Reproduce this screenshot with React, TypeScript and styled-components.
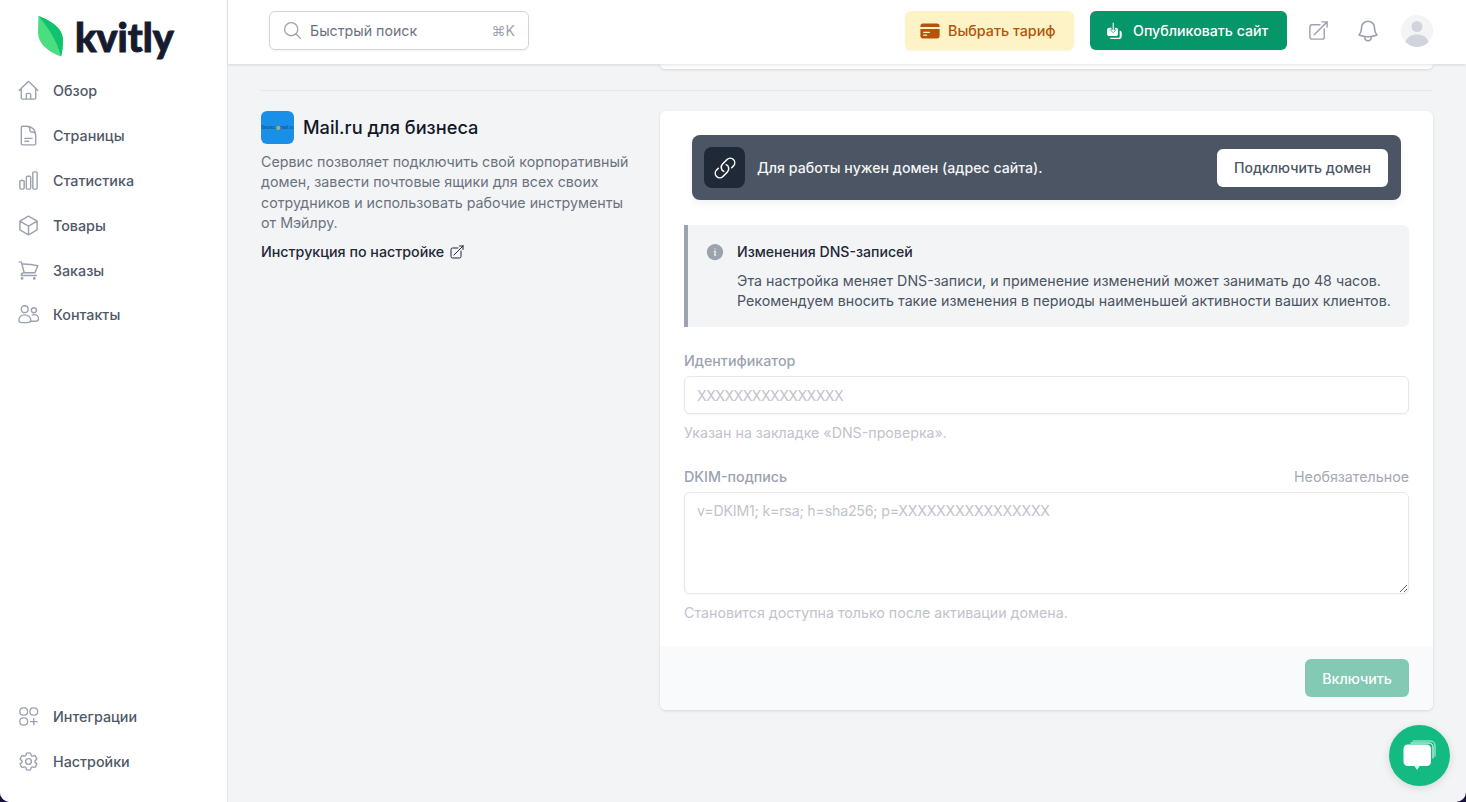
import styled, { createGlobalStyle } from 'styled-components'
import {
  HiOutlineHome,
  HiOutlineDocumentText,
  HiOutlineChartBar,
  HiOutlineCube,
  HiOutlineShoppingCart,
  HiOutlineCog6Tooth,
  HiOutlineMagnifyingGlass,
  HiOutlineArrowTopRightOnSquare,
  HiOutlineBell,
  HiOutlineLink,
  HiInformationCircle,
  HiCreditCard,
} from 'react-icons/hi2'

const GlobalStyle = createGlobalStyle`
  html, body {
    margin: 0;
    height: 802px;
    overflow: hidden;
    background: #1c1240;
  }
  * { box-sizing: border-box; }
  #root {
    height: 802px;
    border-radius: 0 0 10px 10px;
    overflow: hidden;
    font-family: Inter, "Noto Sans", sans-serif;
    font-size: 14.2px;
    color: #111827;
  }
`

function ContactsIcon() {
  return (
    <svg width="1em" height="1em" viewBox="0 0 24 24" fill="none" stroke="currentColor" strokeWidth="1.4">
      <circle cx="8" cy="6.5" r="3.6" />
      <circle cx="17.6" cy="7.6" r="2.6" />
      <path d="M2 18c0-3.4 2.6-5.6 6-5.6s6.400 2.200 6.400 5.400c0 1.800-1.600 2.700-3.400 2.700H5c-1.700 0-3-1-3-2.500Z" />
      <path d="M15.400 12.600c.7-.3 1.400-.4 2.200-.4 2.800 0 4.800 1.800 4.800 4.200 0 1.600-1.200 2.600-2.800 2.600h-5.200" />
    </svg>
  )
}

function IntegrationsIcon() {
  return (
    <svg width="1em" height="1em" viewBox="0 0 24 24" fill="none" stroke="currentColor" strokeWidth="1.4">
      <rect x="3" y="3" width="8" height="7.500" rx="3.500" />
      <rect x="13.500" y="3" width="8" height="7.500" rx="3.500" />
      <rect x="3" y="13.500" width="8" height="7.500" rx="3.500" />
      <path d="M17.500 13.500v7.500M13.500 17.300h8" />
    </svg>
  )
}

function PublishIcon() {
  return (
    <svg width="18" height="20" viewBox="0 0 20 22" fill="none">
      <path d="M3.500 7.500h2.700v4h3.600v-4h1.200c1.300 0 2.300 1 2.300 2.300v4.400c0 1.300-1 2.300-2.300 2.300H3.500c-1.300 0-2.300-1-2.300-2.300V9.800c0-1.300 1-2.300 2.300-2.300Z" fill="#fff" />
      <path d="M7.100 1.500h1.800v8.200h2.300L8 13 4.800 9.700h2.300V1.500Z" fill="#fff" stroke="#059669" strokeWidth=".6" />
      <path d="M15.200 10.500c1.300.3 2.300 1.300 2.300 2.700v3.500c0 1.800-1.400 3.300-3.300 3.300H6.500c-1.100 0-2-.6-2.500-1.500h10.200c.6 0 1-.4 1-1v-7Z" fill="#fff" />
    </svg>
  )
}

function ChatIcon() {
  return (
    <svg width="33" height="31" viewBox="0 0 33 31" fill="none">
      <path d="M10 1h17.500c2.800 0 4.500 1.800 4.500 4.500V16" stroke="#fff" strokeOpacity=".8" strokeWidth="1" strokeLinecap="round" />
      <path d="M8 3h18c2.400 0 4 1.600 4 4v11" stroke="#fff" strokeWidth="1" strokeLinecap="round" />
      <path d="M5 4.500h18.500c2.800 0 4.500 1.800 4.500 4.500v12.500c0 2.800-1.700 4.500-4.500 4.500h-7l-2.500 4-2.500-4H5c-2.800 0-4.500-1.700-4.500-4.500V9c0-2.700 1.700-4.500 4.500-4.500Z" fill="#fff" />
    </svg>
  )
}

const mainNav = [
  { label: 'Обзор', icon: <HiOutlineHome /> },
  { label: 'Страницы', icon: <HiOutlineDocumentText /> },
  { label: 'Статистика', icon: <HiOutlineChartBar /> },
  { label: 'Товары', icon: <HiOutlineCube /> },
  { label: 'Заказы', icon: <HiOutlineShoppingCart /> },
  { label: 'Контакты', icon: <ContactsIcon /> },
]

const bottomNav = [
  { label: 'Интеграции', icon: <IntegrationsIcon /> },
  { label: 'Настройки', icon: <HiOutlineCog6Tooth /> },
]

function App() {
  return (
    <Page>
      <GlobalStyle />
      <Sidebar>
        <Logo>
          <svg width="28" height="42" viewBox="0 0 28 42">
            <path d="M1.500 1C12 5 26 12 26 25c0 7-.8 12.500-2 16.500C12 37 0 29 1 15c.3-5 .2-10 .5-14Z" fill="#4ade80" />
            <path d="M1.500 1C12 5 26 12 26 25c0 7-.8 12.500-2 16.500C21 28 12 13 1.500 1Z" fill="#10c16d" />
          </svg>
          <LogoText>kvitly</LogoText>
        </Logo>
        <Nav>
          {mainNav.map((item) => (
            <NavItem key={item.label}>
              <NavIcon>{item.icon}</NavIcon>
              {item.label}
            </NavItem>
          ))}
        </Nav>
        <BottomNav>
          {bottomNav.map((item) => (
            <NavItem key={item.label}>
              <NavIcon>{item.icon}</NavIcon>
              {item.label}
            </NavItem>
          ))}
        </BottomNav>
      </Sidebar>

      <Main>
        <Header>
          <SearchBox>
            <HiOutlineMagnifyingGlass size={21} color="#9ca3af" />
            <SearchText>Быстрый поиск</SearchText>
            <Shortcut>⌘K</Shortcut>
          </SearchBox>
          <HeaderActions>
            <TariffButton>
              <HiCreditCard size={22} color="#b45309" />
              Выбрать тариф
            </TariffButton>
            <PublishButton>
              <PublishIcon />
              Опубликовать сайт
            </PublishButton>
            <HeaderIconLink $gap={20}>
              <HiOutlineArrowTopRightOnSquare size={23} />
            </HeaderIconLink>
            <HeaderIconLink $gap={25}>
              <HiOutlineBell size={26} />
            </HeaderIconLink>
            <Avatar>
              <svg width="32" height="32" viewBox="0 0 32 32">
                <circle cx="16" cy="11.500" r="5.500" fill="#d1d5db" />
                <path d="M4 28c1.500-6 6.500-8.500 12-8.500s10.500 2.500 12 8.500c-3 2.700-7.200 4-12 4s-9-1.300-12-4Z" fill="#d1d5db" />
              </svg>
            </Avatar>
          </HeaderActions>
        </Header>

        <Content>
          <TopRow>
            <PrevCard />
          </TopRow>
          <Divider />
          <Section>
            <Intro>
              <IntroHead>
                <ServiceLogo>
                  <ServiceLogoText>бизнес<b>@</b>mail.ru</ServiceLogoText>
                </ServiceLogo>
                <ServiceName>Mail.ru для бизнеса</ServiceName>
              </IntroHead>
              <IntroText>
                Сервис позволяет подключить свой корпоративный домен, завести почтовые ящики для всех
                своих сотрудников и использовать рабочие инструменты от Мэйлру.
              </IntroText>
              <GuideLink>
                Инструкция по настройке
                <HiOutlineArrowTopRightOnSquare size={16} />
              </GuideLink>
            </Intro>

            <Card>
              <CardBody>
                <DomainBanner>
                  <BannerIcon>
                    <HiOutlineLink size={24} color="#fff" />
                  </BannerIcon>
                  <BannerText>Для работы нужен домен (адрес сайта).</BannerText>
                  <BannerButton>Подключить домен</BannerButton>
                </DomainBanner>

                <Notice>
                  <NoticeIcon>
                    <HiInformationCircle size={20} color="#9ca3af" />
                  </NoticeIcon>
                  <div>
                    <NoticeTitle>Изменения DNS-записей</NoticeTitle>
                    <NoticeText>
                      Эта настройка меняет DNS-записи, и применение изменений может занимать до 48 часов.
                      <br />
                      Рекомендуем вносить такие изменения в периоды наименьшей активности ваших клиентов.
                    </NoticeText>
                  </div>
                </Notice>

                <Field>
                  <LabelRow>
                    <Label>Идентификатор</Label>
                  </LabelRow>
                  <TextInput disabled placeholder="XXXXXXXXXXXXXXXX" />
                  <Hint>Указан на закладке «DNS-проверка».</Hint>
                </Field>

                <Field>
                  <LabelRow>
                    <Label>DKIM-подпись</Label>
                    <Optional>Необязательное</Optional>
                  </LabelRow>
                  <TextArea disabled placeholder="v=DKIM1; k=rsa; h=sha256; p=XXXXXXXXXXXXXXXX" />
                  <Hint>Становится доступна только после активации домена.</Hint>
                </Field>
              </CardBody>
              <CardFooter>
                <SubmitButton disabled>Включить</SubmitButton>
              </CardFooter>
            </Card>
          </Section>
        </Content>
      </Main>

      <ChatButton>
        <ChatIcon />
      </ChatButton>
    </Page>
  )
}

const Page = styled.div`
  display: flex;
  height: 802px;
  background: #f3f4f6;
`

const Sidebar = styled.aside`
  display: flex;
  flex-direction: column;
  flex: 0 0 228px;
  background: #fff;
  border-right: 1px solid #e5e7eb;
`

const Logo = styled.div`
  display: flex;
  align-items: center;
  gap: 10px;
  height: 68.5px;
  padding: 4px 0 0 37px;
`

const LogoText = styled.span`
  font-family: Lato, sans-serif;
  font-weight: 900;
  font-size: 39.5px;
  line-height: 1;
  color: #161b2e;
  -webkit-text-stroke: 0.9px #161b2e;
`

const Nav = styled.nav`
  display: flex;
  flex-direction: column;
`

const BottomNav = styled(Nav)`
  margin-top: auto;
  padding-bottom: 18px;
`

const NavItem = styled.a`
  display: flex;
  align-items: center;
  gap: 13px;
  height: 44.8px;
  padding-left: 17px;
  color: #4f5967;
  font-size: 14.3px;
  font-weight: 500;
`

const NavIcon = styled.span`
  display: flex;
  color: #9ca3af;
  font-size: 23px;
`

const Main = styled.div`
  display: flex;
  flex-direction: column;
  flex: 1;
  min-width: 0;
`

const Header = styled.header`
  position: relative;
  z-index: 1;
  display: flex;
  align-items: center;
  justify-content: space-between;
  flex: 0 0 64px;
  padding: 0 33px 3px 41px;
  background: #fff;
  box-shadow: 0 1px 3px rgba(0, 0, 0, 0.12);
`

const SearchBox = styled.div`
  display: flex;
  align-items: center;
  gap: 7px;
  width: 260px;
  height: 39px;
  padding: 0 13px 0 12px;
  border: 1px solid #d1d5db;
  border-radius: 6px;
  box-shadow: 0 1px 2px rgba(0, 0, 0, 0.05);
`

const SearchText = styled.span`
  flex: 1;
  color: #6b7280;
  font-size: 14.2px;
`

const Shortcut = styled.span`
  color: #9ca3af;
  font-size: 14px;
`

const HeaderActions = styled.div`
  display: flex;
  align-items: center;
`

const TariffButton = styled.button`
  display: flex;
  align-items: center;
  gap: 7px;
  width: 169px;
  height: 39px;
  padding: 0 0 0 14px;
  border: 0;
  border-radius: 6px;
  background: #fef3c7;
  color: #b45309;
  font: 500 14.3px Inter, sans-serif;
  box-shadow: 0 1px 2px rgba(0, 0, 0, 0.05);
`

const PublishButton = styled(TariffButton)`
  gap: 9px;
  width: 197px;
  margin-left: 16px;
  padding-left: 16px;
  background: #059669;
  color: #fff;
  font-size: 14.2px;
`

const HeaderIconLink = styled.span<{ $gap: number }>`
  display: flex;
  margin-left: ${(p) => p.$gap}px;
  color: #9ca3af;
`

const Avatar = styled.span`
  display: block;
  width: 32px;
  height: 32px;
  margin-left: 20px;
  border-radius: 50%;
  background: #f3f4f6;
  overflow: hidden;
`

const Content = styled.main`
  flex: 1;
  padding: 0 33px;
  overflow: hidden;
`

const TopRow = styled.div`
  display: flex;
  justify-content: flex-end;
`

const PrevCard = styled.div`
  width: 773px;
  height: 5px;
  background: #fff;
  border-radius: 0 0 6px 6px;
  box-shadow: 0 1px 3px rgba(0, 0, 0, 0.12);
`

const Divider = styled.div`
  height: 1px;
  margin-top: 21px;
  background: #e5e7eb;
`

const Section = styled.section`
  display: grid;
  grid-template-columns: 375px 773px;
  justify-content: space-between;
  padding-top: 20px;
`

const Intro = styled.div`
  display: flex;
  flex-direction: column;
`

const IntroHead = styled.div`
  display: flex;
  align-items: center;
  gap: 9px;
`

const ServiceLogo = styled.div`
  display: flex;
  align-items: center;
  justify-content: center;
  width: 33px;
  height: 33px;
  border-radius: 6px;
  background: #1a8fe8;
`

const ServiceLogoText = styled.span`
  font-size: 4.2px;
  white-space: nowrap;
  color: #123f66;

  b {
    color: #f5b81f;
  }
`

const ServiceName = styled.h2`
  margin: 0 0 2px;
  font-size: 18.2px;
  font-weight: 500;
  color: #111827;
`

const IntroText = styled.p`
  margin: 8px 0 0;
  color: #6b7280;
  font-size: 14.25px;
  line-height: 20.4px;
`

const GuideLink = styled.a`
  display: flex;
  align-items: center;
  gap: 5px;
  margin-top: 8px;
  color: #1f2937;
  font-size: 14.25px;
  font-weight: 500;
  line-height: 20px;
`

const Card = styled.div`
  background: #fff;
  border-radius: 6px;
  box-shadow: 0 1px 3px rgba(0, 0, 0, 0.12);
  overflow: hidden;
`

const CardBody = styled.div`
  display: flex;
  flex-direction: column;
  padding: 24px 24px 0;
  height: 535px;
`

const DomainBanner = styled.div`
  display: flex;
  align-items: center;
  gap: 12px;
  height: 65px;
  margin: 0 8px;
  padding: 0 13px 0 12px;
  border-radius: 8px;
  background: #4b5563;
  box-shadow: 0 4px 10px rgba(0, 0, 0, 0.05);
`

const BannerIcon = styled.div`
  display: flex;
  align-items: center;
  justify-content: center;
  flex: 0 0 41px;
  height: 41px;
  border-radius: 8px;
  background: #1f2937;
`

const BannerText = styled.span`
  flex: 1;
  color: #f3f4f6;
  font-size: 14.15px;
  font-weight: 500;
`

const BannerButton = styled.button`
  width: 171px;
  height: 38px;
  border: 0;
  border-radius: 6px;
  background: #fff;
  color: #4b5563;
  font: 500 14.1px Inter, sans-serif;
`

const Notice = styled.div`
  display: flex;
  gap: 12px;
  height: 102px;
  margin-top: 25px;
  padding: 17px 10px 0 17px;
  border-left: 4px solid #9ca3af;
  border-radius: 0 6px 6px 0;
  background: #f3f4f6;
`

const NoticeIcon = styled.span`
  display: flex;
  height: 20px;
`

const NoticeTitle = styled.div`
  color: #1f2937;
  font-size: 14.1px;
  font-weight: 500;
  line-height: 20px;
`

const NoticeText = styled.div`
  margin-top: 9px;
  color: #4b5563;
  font-size: 14.23px;
  line-height: 20px;
  white-space: nowrap;
`

const Field = styled.div`
  display: flex;
  flex-direction: column;
  margin-top: 24px;
`

const LabelRow = styled.div`
  display: flex;
  justify-content: space-between;
  height: 20px;
  margin-bottom: 5px;
`

const Label = styled.label`
  color: #9ca3af;
  font-size: 14.25px;
  font-weight: 500;
  line-height: 20px;
`

const Optional = styled.span`
  color: #a3a9b3;
  font-size: 14.25px;
  line-height: 20px;
`

const TextInput = styled.input`
  height: 38px;
  padding: 0 12px;
  border: 1px solid #e5e7eb;
  border-radius: 6px;
  background: #fff;
  font: 14.2px Inter, sans-serif;
  letter-spacing: -0.55px;
  box-shadow: 0 1px 2px rgba(0, 0, 0, 0.05);

  &::placeholder {
    color: #c0c4cc;
    opacity: 1;
  }
`

const TextArea = styled.textarea`
  height: 102px;
  padding: 9px 12px;
  border: 1px solid #e5e7eb;
  border-radius: 6px;
  background: #fff;
  font: 14.2px Inter, sans-serif;
  letter-spacing: -0.2px;
  box-shadow: 0 1px 2px rgba(0, 0, 0, 0.05);
  resize: vertical;

  &::placeholder {
    color: #c0c4cc;
    opacity: 1;
  }
`

const Hint = styled.p`
  margin: 9px 0 0;
  color: #c0c4cc;
  font-size: 14.22px;
  line-height: 20px;
`

const CardFooter = styled.div`
  display: flex;
  justify-content: flex-end;
  align-items: center;
  height: 64px;
  padding: 0 24px;
  background: #f9fafb;
`

const SubmitButton = styled.button`
  width: 104px;
  height: 38px;
  border: 0;
  border-radius: 6px;
  background: #059669;
  color: #fff;
  font: 500 14.2px Inter, sans-serif;
  opacity: 0.48;
`

const ChatButton = styled.div`
  position: fixed;
  right: 16px;
  bottom: 16px;
  display: flex;
  align-items: center;
  justify-content: center;
  width: 61px;
  height: 61px;
  border-radius: 50%;
  background: #13bb83;
  box-shadow: 0 2px 8px rgba(0, 0, 0, 0.12);
`

export default App
